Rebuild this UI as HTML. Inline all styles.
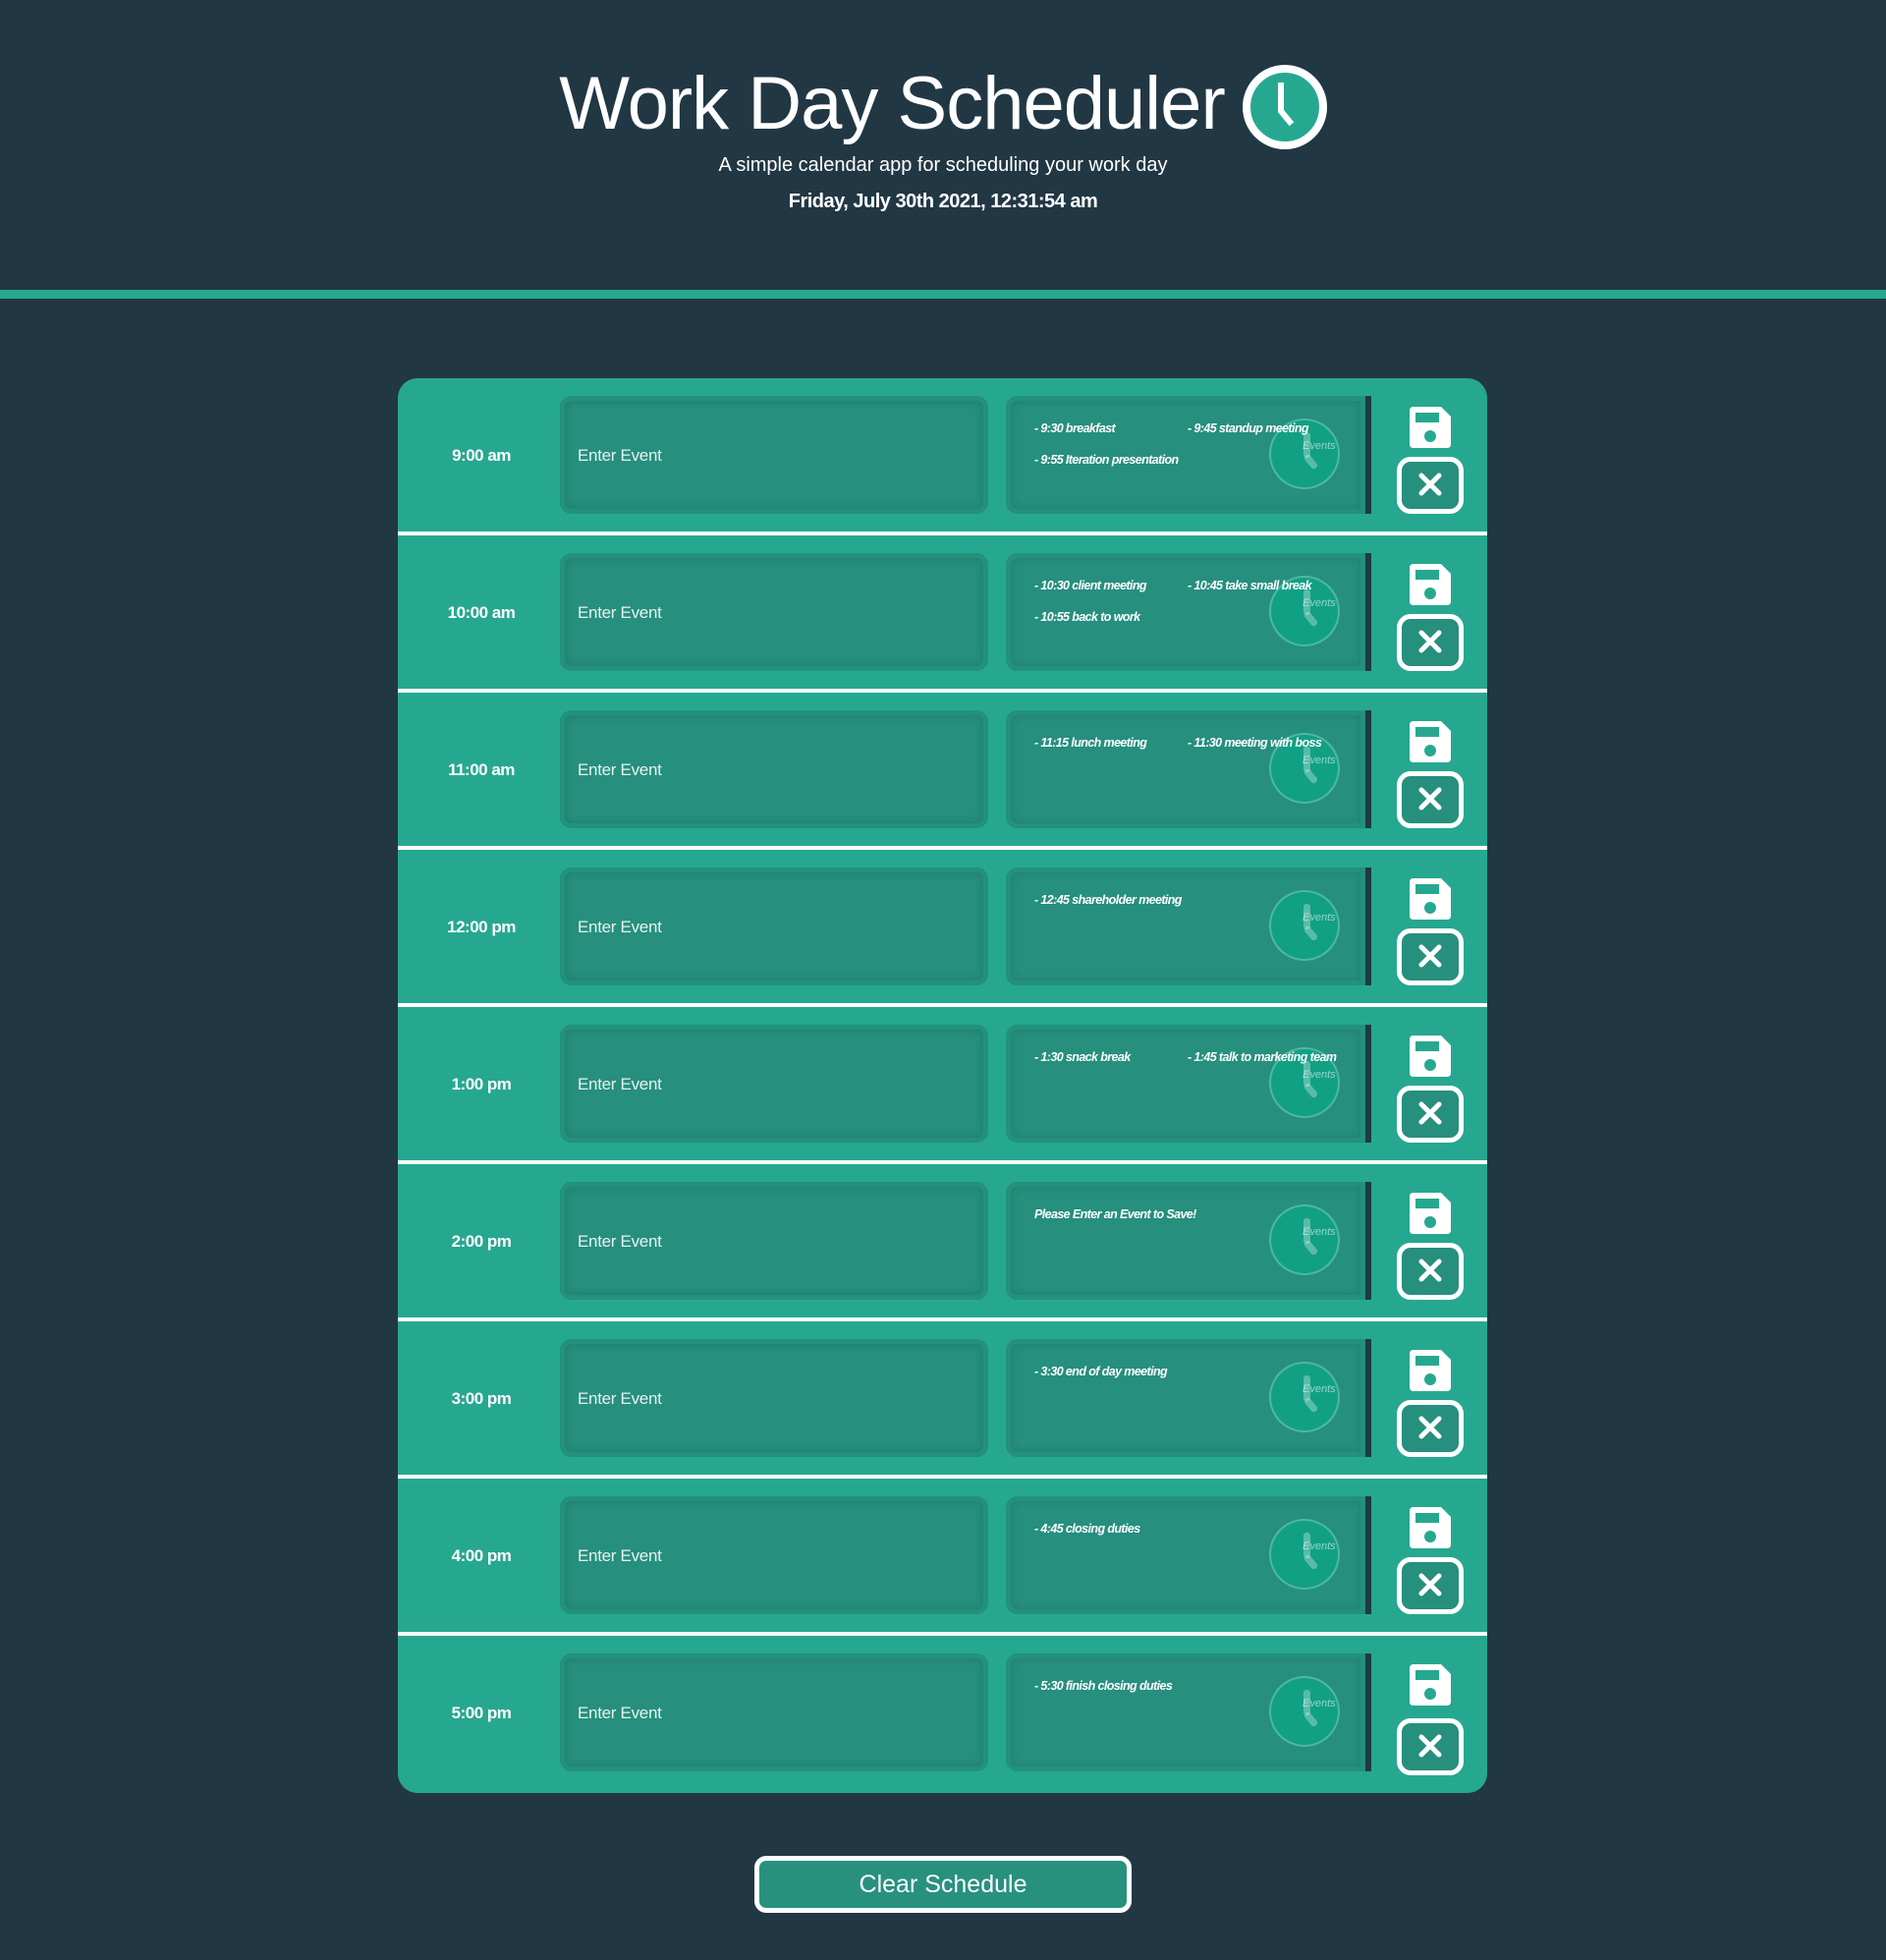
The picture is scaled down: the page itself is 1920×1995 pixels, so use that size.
<!DOCTYPE html>
<html><head><meta charset="utf-8"><style>
*{box-sizing:border-box;margin:0;padding:0}
body{width:1920px;height:1995px;background:#223744;font-family:"Liberation Sans",sans-serif;color:#fff;position:relative;overflow:hidden}
.title{position:absolute;left:0;width:1816px;text-align:center;top:62px;font-size:76px;font-weight:normal;letter-spacing:-1px}
.clk{position:absolute;left:1264px;top:65px}
.sub{position:absolute;left:0;width:1920px;text-align:center;top:157px;font-size:20px}
.date{position:absolute;left:0;width:1920px;text-align:center;top:194px;font-size:20px;font-weight:bold;letter-spacing:-0.5px}
.line{position:absolute;left:0;top:295px;width:1920px;height:9px;background:#26a98f}
.cont{position:absolute;left:405px;top:385px;width:1109px;height:1440px;background:#26a890;border-radius:20px;overflow:hidden}
.row{position:absolute;left:0;width:1109px;height:156px}
.sep{position:absolute;left:0;width:1109px;height:4px;background:#fff}
.time{position:absolute;left:35px;width:100px;text-align:center;top:69px;font-size:17px;font-weight:bold;letter-spacing:-0.5px}
.inp{position:absolute;left:165px;top:18px;width:436px;height:120px;background:#268f7d;border-radius:12px;box-shadow:inset 0 0 0 5px #23917b,inset 0 0 8px 6px rgba(0,0,0,.12)}
.inp span{position:absolute;left:18px;top:51px;font-size:17px;color:#e6f2ef;letter-spacing:-0.3px}
.ev{position:absolute;left:619px;top:18px;width:372px;height:120px;background:#268f7d;border-radius:12px 0 0 12px;box-shadow:inset 0 0 0 5px #23917b,inset 0 0 8px 6px rgba(0,0,0,.1);border-right:6px solid #1f3a44}
.ev i{position:absolute;font-size:12.5px;font-weight:bold;letter-spacing:-0.6px;white-space:nowrap}
.wm{position:absolute;left:268px;top:23px;width:72px;height:72px;border-radius:50%;background:#12a084;border:2px solid rgba(255,255,255,.25)}
.wm:before{content:"";position:absolute;left:33px;top:12px;width:7px;height:26px;background:rgba(255,255,255,.3);border-radius:3px}
.wm:after{content:"";position:absolute;left:37px;top:34px;width:7px;height:16px;background:rgba(255,255,255,.3);border-radius:3px;transform:rotate(-40deg)}
.wm b{position:absolute;left:32px;top:20px;font-size:11px;font-style:italic;font-weight:normal;color:rgba(255,255,255,.55);z-index:2}
.save{position:absolute;left:1030px;top:29px}
.x{position:absolute;left:1017px;top:80px;width:68px;height:58px;border:5px solid #fff;border-radius:14px;background:#268f7d}
.x svg{position:absolute;left:16px;top:10px}
.btn{position:absolute;left:768px;top:1889px;width:384px;height:58px;border:5px solid #fff;border-radius:12px;background:#27917e;text-align:center;font-size:25px;line-height:48px}
</style></head><body>
<div class="title">Work Day Scheduler</div>
<svg class="clk" width="88" height="88" viewBox="0 0 88 88"><circle cx="44" cy="44" r="39" fill="#26a890" stroke="#fff" stroke-width="8"/><path d="M40 22 V48 L49 59" stroke="#fff" stroke-width="6" fill="none" stroke-linecap="square"/></svg>
<div class="sub">A simple calendar app for scheduling your work day</div>
<div class="date">Friday, July 30th 2021, 12:31:54 am</div>
<div class="line"></div>
<div class="cont">
<div class="row" style="top:0"><div class="time">9:00 am</div><div class="inp"><span>Enter Event</span></div><div class="ev"><div class="wm"><b>Events</b></div><i style="left:29px;top:26px">- 9:30 breakfast</i><i style="left:185px;top:26px">- 9:45 standup meeting</i><i style="left:29px;top:58px">- 9:55 Iteration presentation</i></div>
<svg class="save" width="42" height="42" viewBox="0 0 42 42"><path d="M0 4 Q0 0 4 0 H32 L42 10 V38 Q42 42 38 42 H4 Q0 42 0 38Z M6 6 V16 H30 V6Z" fill="#fff" fill-rule="evenodd"/><circle cx="21" cy="30" r="6" fill="#26a890"/></svg>
<div class="x"><svg width="26" height="26"><path d="M4 4 L22 22 M22 4 L4 22" stroke="#fff" stroke-width="5" stroke-linecap="round"/></svg></div></div>
<div class="sep" style="top:156px"></div>

<div class="row" style="top:160px"><div class="time">10:00 am</div><div class="inp"><span>Enter Event</span></div><div class="ev"><div class="wm"><b>Events</b></div><i style="left:29px;top:26px">- 10:30 client meeting</i><i style="left:185px;top:26px">- 10:45 take small break</i><i style="left:29px;top:58px">- 10:55 back to work</i></div>
<svg class="save" width="42" height="42" viewBox="0 0 42 42"><path d="M0 4 Q0 0 4 0 H32 L42 10 V38 Q42 42 38 42 H4 Q0 42 0 38Z M6 6 V16 H30 V6Z" fill="#fff" fill-rule="evenodd"/><circle cx="21" cy="30" r="6" fill="#26a890"/></svg>
<div class="x"><svg width="26" height="26"><path d="M4 4 L22 22 M22 4 L4 22" stroke="#fff" stroke-width="5" stroke-linecap="round"/></svg></div></div>
<div class="sep" style="top:316px"></div>

<div class="row" style="top:320px"><div class="time">11:00 am</div><div class="inp"><span>Enter Event</span></div><div class="ev"><div class="wm"><b>Events</b></div><i style="left:29px;top:26px">- 11:15 lunch meeting</i><i style="left:185px;top:26px">- 11:30 meeting with boss</i></div>
<svg class="save" width="42" height="42" viewBox="0 0 42 42"><path d="M0 4 Q0 0 4 0 H32 L42 10 V38 Q42 42 38 42 H4 Q0 42 0 38Z M6 6 V16 H30 V6Z" fill="#fff" fill-rule="evenodd"/><circle cx="21" cy="30" r="6" fill="#26a890"/></svg>
<div class="x"><svg width="26" height="26"><path d="M4 4 L22 22 M22 4 L4 22" stroke="#fff" stroke-width="5" stroke-linecap="round"/></svg></div></div>
<div class="sep" style="top:476px"></div>

<div class="row" style="top:480px"><div class="time">12:00 pm</div><div class="inp"><span>Enter Event</span></div><div class="ev"><div class="wm"><b>Events</b></div><i style="left:29px;top:26px">- 12:45 shareholder meeting</i></div>
<svg class="save" width="42" height="42" viewBox="0 0 42 42"><path d="M0 4 Q0 0 4 0 H32 L42 10 V38 Q42 42 38 42 H4 Q0 42 0 38Z M6 6 V16 H30 V6Z" fill="#fff" fill-rule="evenodd"/><circle cx="21" cy="30" r="6" fill="#26a890"/></svg>
<div class="x"><svg width="26" height="26"><path d="M4 4 L22 22 M22 4 L4 22" stroke="#fff" stroke-width="5" stroke-linecap="round"/></svg></div></div>
<div class="sep" style="top:636px"></div>

<div class="row" style="top:640px"><div class="time">1:00 pm</div><div class="inp"><span>Enter Event</span></div><div class="ev"><div class="wm"><b>Events</b></div><i style="left:29px;top:26px">- 1:30 snack break</i><i style="left:185px;top:26px">- 1:45 talk to marketing team</i></div>
<svg class="save" width="42" height="42" viewBox="0 0 42 42"><path d="M0 4 Q0 0 4 0 H32 L42 10 V38 Q42 42 38 42 H4 Q0 42 0 38Z M6 6 V16 H30 V6Z" fill="#fff" fill-rule="evenodd"/><circle cx="21" cy="30" r="6" fill="#26a890"/></svg>
<div class="x"><svg width="26" height="26"><path d="M4 4 L22 22 M22 4 L4 22" stroke="#fff" stroke-width="5" stroke-linecap="round"/></svg></div></div>
<div class="sep" style="top:796px"></div>

<div class="row" style="top:800px"><div class="time">2:00 pm</div><div class="inp"><span>Enter Event</span></div><div class="ev"><div class="wm"><b>Events</b></div><i style="left:29px;top:26px">Please Enter an Event to Save!</i></div>
<svg class="save" width="42" height="42" viewBox="0 0 42 42"><path d="M0 4 Q0 0 4 0 H32 L42 10 V38 Q42 42 38 42 H4 Q0 42 0 38Z M6 6 V16 H30 V6Z" fill="#fff" fill-rule="evenodd"/><circle cx="21" cy="30" r="6" fill="#26a890"/></svg>
<div class="x"><svg width="26" height="26"><path d="M4 4 L22 22 M22 4 L4 22" stroke="#fff" stroke-width="5" stroke-linecap="round"/></svg></div></div>
<div class="sep" style="top:956px"></div>

<div class="row" style="top:960px"><div class="time">3:00 pm</div><div class="inp"><span>Enter Event</span></div><div class="ev"><div class="wm"><b>Events</b></div><i style="left:29px;top:26px">- 3:30 end of day meeting</i></div>
<svg class="save" width="42" height="42" viewBox="0 0 42 42"><path d="M0 4 Q0 0 4 0 H32 L42 10 V38 Q42 42 38 42 H4 Q0 42 0 38Z M6 6 V16 H30 V6Z" fill="#fff" fill-rule="evenodd"/><circle cx="21" cy="30" r="6" fill="#26a890"/></svg>
<div class="x"><svg width="26" height="26"><path d="M4 4 L22 22 M22 4 L4 22" stroke="#fff" stroke-width="5" stroke-linecap="round"/></svg></div></div>
<div class="sep" style="top:1116px"></div>

<div class="row" style="top:1120px"><div class="time">4:00 pm</div><div class="inp"><span>Enter Event</span></div><div class="ev"><div class="wm"><b>Events</b></div><i style="left:29px;top:26px">- 4:45 closing duties</i></div>
<svg class="save" width="42" height="42" viewBox="0 0 42 42"><path d="M0 4 Q0 0 4 0 H32 L42 10 V38 Q42 42 38 42 H4 Q0 42 0 38Z M6 6 V16 H30 V6Z" fill="#fff" fill-rule="evenodd"/><circle cx="21" cy="30" r="6" fill="#26a890"/></svg>
<div class="x"><svg width="26" height="26"><path d="M4 4 L22 22 M22 4 L4 22" stroke="#fff" stroke-width="5" stroke-linecap="round"/></svg></div></div>
<div class="sep" style="top:1276px"></div>

<div class="row" style="top:1280px"><div class="time">5:00 pm</div><div class="inp"><span>Enter Event</span></div><div class="ev"><div class="wm"><b>Events</b></div><i style="left:29px;top:26px">- 5:30 finish closing duties</i></div>
<svg class="save" width="42" height="42" viewBox="0 0 42 42"><path d="M0 4 Q0 0 4 0 H32 L42 10 V38 Q42 42 38 42 H4 Q0 42 0 38Z M6 6 V16 H30 V6Z" fill="#fff" fill-rule="evenodd"/><circle cx="21" cy="30" r="6" fill="#26a890"/></svg>
<div class="x" style="top:84px"><svg width="26" height="26"><path d="M4 4 L22 22 M22 4 L4 22" stroke="#fff" stroke-width="5" stroke-linecap="round"/></svg></div></div>
</div>
<div class="btn">Clear Schedule</div>
</body></html>
